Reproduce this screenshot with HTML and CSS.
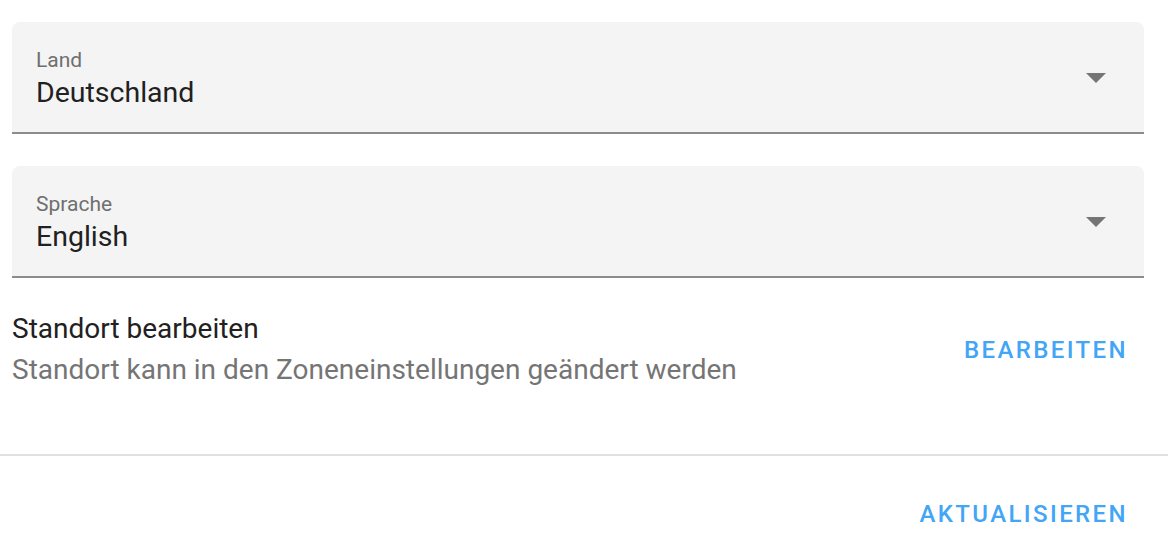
FILE: index.html
```html
<!DOCTYPE html>
<html>
<head>
<meta charset="utf-8">
<link rel="stylesheet" href="styles.css">
</head>
<body>
<div class="card">
  <div class="content">
    <div class="select">
      <div class="select-text">
        <div class="label">Land</div>
        <div class="value">Deutschland</div>
      </div>
      <svg class="arrow" width="20" height="10" viewBox="0 0 20 10"><path d="M0 0 L20 0 L10 10 Z" fill="#757575"/></svg>
    </div>
    <div class="select">
      <div class="select-text">
        <div class="label">Sprache</div>
        <div class="value">English</div>
      </div>
      <svg class="arrow" width="20" height="10" viewBox="0 0 20 10"><path d="M0 0 L20 0 L10 10 Z" fill="#757575"/></svg>
    </div>
    <div class="row">
      <div class="row-text">
        <div class="primary">Standort bearbeiten</div>
        <div class="secondary">Standort kann in den Zoneneinstellungen geändert werden</div>
      </div>
      <button class="btn">Bearbeiten</button>
    </div>
  </div>
  <div class="actions">
    <button class="btn">Aktualisieren</button>
  </div>
</div>
</body>
</html>
```

FILE: styles.css
```css
html, body {
  margin: 0;
  padding: 0;
  background: #ffffff;
}
body {
  font-family: Roboto, "Liberation Sans", sans-serif;
  width: 1168px;
  height: 558px;
  overflow: hidden;
}
.content {
  padding: 22px 24px 0 12px;
  display: flex;
  flex-direction: column;
  gap: 32px;
}
.select {
  background: #f4f4f4;
  border-bottom: 2px solid #8c8c8c;
  border-radius: 8px 8px 0 0;
  display: flex;
  align-items: flex-start;
  justify-content: space-between;
  padding: 26px 38px 0 24px;
  box-sizing: content-box;
  height: 84px;
}
.select-text {
  display: flex;
  flex-direction: column;
  gap: 5px;
}
.label {
  font-size: 21px;
  line-height: 24px;
  color: #6f6f6f;
}
.value {
  font-size: 28.5px;
  line-height: 32px;
  color: #212121;
}
.arrow {
  margin-top: 25px;
  display: block;
}
.row {
  display: flex;
  align-items: center;
  justify-content: space-between;
  margin-top: -1px;
}
.primary {
  font-size: 28px;
  line-height: 40px;
  color: #212121;
}
.secondary {
  font-size: 28px;
  line-height: 41px;
  color: #757575;
}
.btn {
  font-family: Roboto, "Liberation Sans", sans-serif;
  background: none;
  border: none;
  text-transform: uppercase;
  color: #42a5f5;
  font-size: 24px;
  font-weight: 500;
  letter-spacing: 2.4px;
  padding: 0 16px;
  height: 72px;
  cursor: pointer;
}
.actions {
  margin-top: 64px;
  border-top: 2px solid #e0e0e0;
  display: flex;
  justify-content: flex-end;
  padding: 22px 24px 0 0;
}
```
